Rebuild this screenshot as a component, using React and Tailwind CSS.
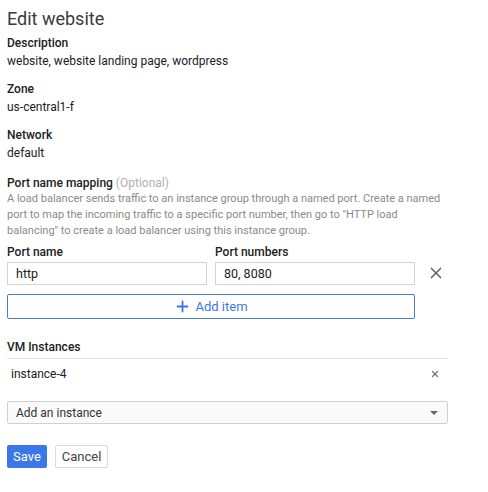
import { Plus, X } from 'lucide-react';

const Field = ({ label, value, className = "" }) => (
  <div className={className}>
    <div className="text-[12px] leading-4 font-medium text-[#212121]">{label}</div>
    <div className="mt-[2px] text-[12px] leading-4 text-[#212121]">{value}</div>
  </div>
);

const App = () => {
  return (
    <div className="w-[488px] h-[492px] bg-white pl-[7px] pt-[7px] font-['Roboto',sans-serif]">
      <h1 className="text-[18px] leading-6 text-[#3a3a3a] font-normal">Edit website</h1>

      <Field label="Description" value="website, website landing page, wordpress" className="mt-1" />
      <Field label="Zone" value="us-central1-f" className="mt-[12px]" />
      <Field label="Network" value="default" className="mt-[12px]" />

      <div className="mt-[14px]">
        <div className="text-[12px] leading-4 font-medium text-[#212121]">
          Port name mapping <span className="font-normal text-[#b0b0b0]">(Optional)</span>
        </div>
        <p className="w-[440px] text-[11px] leading-4 text-[#8a8a8a]">
          A load balancer sends traffic to an instance group through a named port. Create a named
          port to map the incoming traffic to a specific port number, then go to "HTTP load
          balancing" to create a load balancer using this instance group.
        </p>

        <div className="mt-[5px] flex items-end">
          <div className="w-[408px]">
            <div className="grid grid-cols-2 gap-2">
              <div className="text-[12px] leading-4 font-medium text-[#212121]">Port name</div>
              <div className="text-[12px] leading-4 font-medium text-[#212121]">Port numbers</div>
            </div>
            <div className="mt-[2px] grid grid-cols-2 gap-2">
              <input
                defaultValue="http"
                className="h-[23px] px-2 border border-[#d4d4d4] text-[12.5px] text-[#212121] outline-none"
              />
              <input
                defaultValue="80, 8080"
                className="h-[23px] px-2 border border-[#d4d4d4] text-[12.5px] text-[#212121] outline-none"
              />
            </div>
          </div>
          <button className="ml-[12px] mb-[3px] text-[#666]">
            <X size={18} strokeWidth={2.2} />
          </button>
        </div>

        <button className="mt-[9px] w-[408px] h-[25px] flex items-center justify-center gap-1 border border-[#4a7bd0] rounded-[2px] text-[13px] text-[#3b78e7]">
          <Plus size={17} strokeWidth={2.6} />
          Add item
        </button>
      </div>

      <div className="mt-5 w-[441px]">
        <div className="pb-[3px] border-b border-[#e4e4e4] text-[12px] leading-4 font-medium text-[#212121]">
          VM Instances
        </div>
        <div className="mt-[7px] flex items-center justify-between pl-1 pr-2">
          <span className="text-[12px] leading-4 text-[#212121]">instance-4</span>
          <X size={10} strokeWidth={3} className="text-[#777]" />
        </div>
        <div className="mt-[19px] h-[23px] flex items-center justify-between pl-2 pr-[9px] border border-[#d0d0d0] bg-[#fafafa] rounded-[2px]">
          <span className="text-[12px] text-[#333]">Add an instance</span>
          <span className="w-0 h-0 border-l-4 border-r-4 border-t-4 border-l-transparent border-r-transparent border-t-[#666]"></span>
        </div>
      </div>

      <div className="mt-[21px] flex gap-2">
        <button className="h-[23px] px-[6px] bg-[#3b78e7] rounded-[2px] text-[13px] text-white">Save</button>
        <button className="h-[23px] px-[6px] border border-[#dcdcdc] rounded-[2px] bg-white text-[13px] text-[#444]">Cancel</button>
      </div>
    </div>
  );
};

export default App;
